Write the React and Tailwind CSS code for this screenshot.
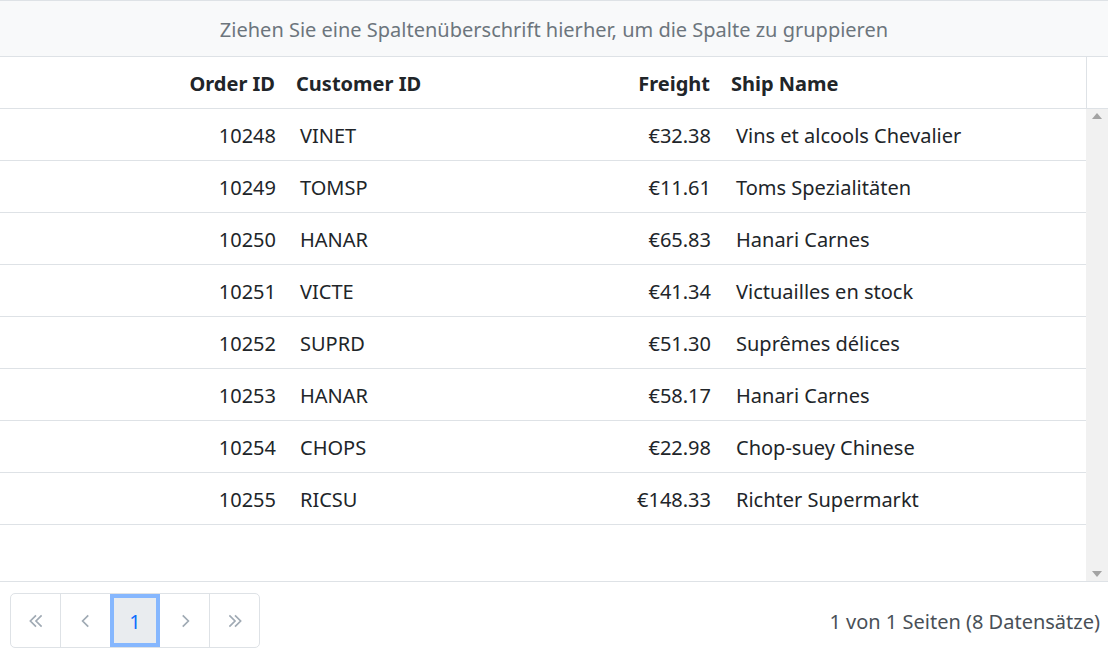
import React from "react";

const rows = [
  ["10248", "VINET", "€32.38", "Vins et alcools Chevalier"],
  ["10249", "TOMSP", "€11.61", "Toms Spezialitäten"],
  ["10250", "HANAR", "€65.83", "Hanari Carnes"],
  ["10251", "VICTE", "€41.34", "Victuailles en stock"],
  ["10252", "SUPRD", "€51.30", "Suprêmes délices"],
  ["10253", "HANAR", "€58.17", "Hanari Carnes"],
  ["10254", "CHOPS", "€22.98", "Chop-suey Chinese"],
  ["10255", "RICSU", "€148.33", "Richter Supermarkt"],
];

const cols = "grid grid-cols-[286px_255px_180px_1fr]";

function Chevron({ dir = "left", double = false }) {
  return (
    <svg width="18" height="18" viewBox="0 0 16 16" fill="none" stroke="#a0aab4" strokeWidth="1.5">
      {double ? (
        <>
          <path d={dir === "left" ? "M8 3 L3 8 L8 13" : "M3 3 L8 8 L3 13"} />
          <path d={dir === "left" ? "M13 3 L8 8 L13 13" : "M8 3 L13 8 L8 13"} />
        </>
      ) : (
        <path d={dir === "left" ? "M10 3 L5 8 L10 13" : "M6 3 L11 8 L6 13"} />
      )}
    </svg>
  );
}

export default function App() {
  return (
    <div className="w-[1108px] h-[654px] bg-white text-[#212529] text-[20px] font-['Noto_Sans',sans-serif] overflow-hidden">
      <div className="h-[57px] pt-[2px] border-y border-[#dee2e6] bg-[#f8f9fa] flex items-center justify-center text-[#6c757d]">
        Ziehen Sie eine Spaltenüberschrift hierher, um die Spalte zu gruppieren
      </div>
      <div className="flex h-[52px] border-b border-[#dee2e6]">
        <div className={`${cols} flex-1 font-bold items-center pt-[3px]`}>
          <div className="text-right pr-[11px]">Order ID</div>
          <div className="pl-[10px]">Customer ID</div>
          <div className="text-right pr-[11px]">Freight</div>
          <div className="pl-[10px]">Ship Name</div>
        </div>
        <div className="w-[22px] border-l border-[#dee2e6]" />
      </div>
      <div className="flex h-[473px] border-b border-[#dee2e6]">
        <div className="flex-1">
          {rows.map((r) => (
            <div key={r[0]} className={`${cols} h-[52px] pt-[2px] border-b border-[#dee2e6] items-center`}>
              <div className="text-right pr-[10px]">{r[0]}</div>
              <div className="pl-[14px]">{r[1]}</div>
              <div className="text-right pr-[10px]">{r[2]}</div>
              <div className="pl-[15px]">{r[3]}</div>
            </div>
          ))}
        </div>
        <div className="w-[22px] bg-[#f1f1f1] flex flex-col justify-between items-center py-[4px]">
          <svg width="10" height="6" viewBox="0 0 10 6"><path d="M0 6 L5 0 L10 6 Z" fill="#a3a3a3" /></svg>
          <svg width="10" height="6" viewBox="0 0 10 6"><path d="M0 0 L5 6 L10 0 Z" fill="#a3a3a3" /></svg>
        </div>
      </div>
      <div className="flex items-center justify-between pl-[10px] pr-[8px] pt-[11px]">
        <div className="flex h-[55px] border border-[#dee2e6] rounded-[5px] overflow-hidden">
          <button className="w-[49px] flex items-center justify-center"><Chevron dir="left" double /></button>
          <button className="w-[50px] flex items-center justify-center border-l border-[#dee2e6]"><Chevron dir="left" /></button>
          <button className="w-[50px] pt-[2px] flex items-center justify-center bg-[#e9ecef] border-[4px] border-[#86b7fe] text-[#0d6efd]">1</button>
          <button className="w-[49px] flex items-center justify-center"><Chevron dir="right" /></button>
          <button className="w-[50px] flex items-center justify-center border-l border-[#dee2e6]"><Chevron dir="right" double /></button>
        </div>
        <div className="text-[#495057] pt-[2px]">1 von 1 Seiten (8 Datensätze)</div>
      </div>
    </div>
  );
}
